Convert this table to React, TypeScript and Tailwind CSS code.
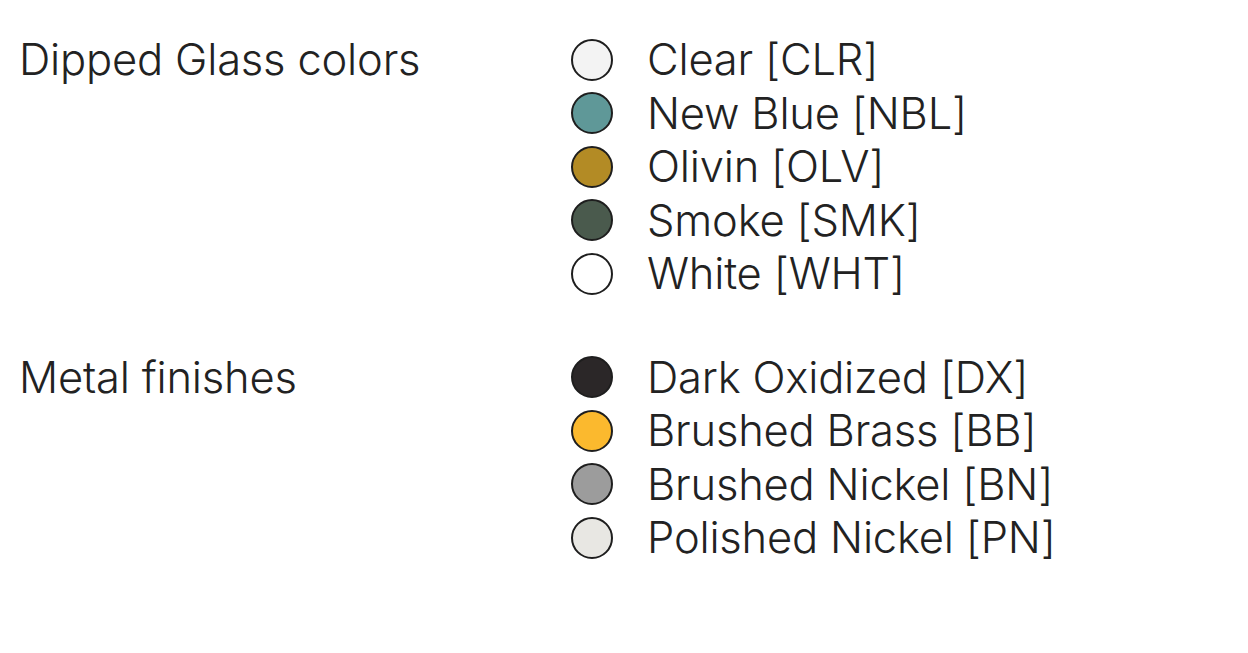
import React from 'react';

type Swatch = { name: string; code: string; color: string };

const glass: Swatch[] = [
  { name: 'Clear', code: 'CLR', color: 'bg-[#f3f3f3]' },
  { name: 'New Blue', code: 'NBL', color: 'bg-[#5f9898]' },
  { name: 'Olivin', code: 'OLV', color: 'bg-[#b38b25]' },
  { name: 'Smoke', code: 'SMK', color: 'bg-[#4a5a4d]' },
  { name: 'White', code: 'WHT', color: 'bg-white' },
];

const metal: Swatch[] = [
  { name: 'Dark Oxidized', code: 'DX', color: 'bg-[#2b2728]' },
  { name: 'Brushed Brass', code: 'BB', color: 'bg-[#fbb92e]' },
  { name: 'Brushed Nickel', code: 'BN', color: 'bg-[#9c9c9c]' },
  { name: 'Polished Nickel', code: 'PN', color: 'bg-[#e8e7e3]' },
];

const Group = ({ title, items }: { title: string; items: Swatch[] }) => (
  <div className="grid grid-cols-[571px_1fr]">
    <div className="h-[53.5px] flex items-center pl-[19px]">{title}</div>
    <ul>
      {items.map((s) => (
        <li key={s.code} className="h-[53.5px] flex items-center">
          <span className={`h-[42px] w-[42px] shrink-0 rounded-full border-2 border-[#1e1e1e] ${s.color}`} />
          <span className="ml-[34px]">
            {s.name} [{s.code}]
          </span>
        </li>
      ))}
    </ul>
  </div>
);

export default function App() {
  return (
    <div className="min-h-[653px] w-[1248px] bg-white pt-[33px] text-[43.5px] font-light text-[#222] font-['Inter',sans-serif] tracking-[-0.2px]">
      <Group title="Dipped Glass colors" items={glass} />
      <div className="h-[50px]" />
      <Group title="Metal finishes" items={metal} />
    </div>
  );
}
